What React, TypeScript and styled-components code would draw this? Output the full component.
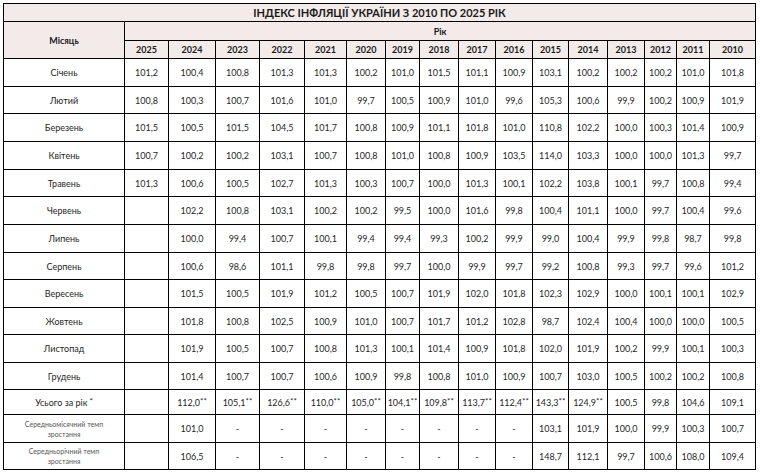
import React from "react";
import styled, { createGlobalStyle } from "styled-components";

const GlobalStyle = createGlobalStyle`
  html, body {
    margin: 0;
    padding: 0;
    background: #fff;
  }
  body {
    font-family: Lato, "Liberation Sans", sans-serif;
    color: #1f1f1f;
  }
`;

const Page = styled.div`
  padding: 3px 0 0 3px;
`;

const Table = styled.table`
  border-collapse: collapse;
  table-layout: fixed;
  width: 753px;
  font-size: 9px;
`;

const HeadCell = styled.th<{ $h?: number }>`
  border: 1px solid #000;
  background: #f3eaea;
  font-weight: 700;
  text-align: center;
  vertical-align: middle;
  padding: 0;
  height: ${(p) => p.$h ?? 17}px;
  color: #1a1a1a;
`;

const Title = styled(HeadCell)`
  font-size: 11px;
`;

const RowHead = styled.td<{ $small?: boolean }>`
  border: 1px solid #000;
  text-align: center;
  vertical-align: middle;
  padding: 0 4px;
  font-size: ${(p) => (p.$small ? "7px" : "9px")};
  line-height: ${(p) => (p.$small ? "10px" : "normal")};
  color: ${(p) => (p.$small ? "#555" : "#1f1f1f")};
`;

const Row = styled.tr<{ $h: number }>`
  height: ${(p) => p.$h}px;
`;

const Cell = styled.td`
  border: 1px solid #000;
  text-align: center;
  vertical-align: middle;
  padding: 0;
  white-space: nowrap;
`;

const Stars = styled.sup`
  font-size: 8px;
  line-height: 0;
  vertical-align: 2px;
`;

const colWidths = [121, 44, 47, 44, 45, 42, 39, 34, 39, 37, 37, 36, 39, 37, 32, 33, 46];
const years = [2025, 2024, 2023, 2022, 2021, 2020, 2019, 2018, 2017, 2016, 2015, 2014, 2013, 2012, 2011, 2010];

type DataRow = { label: string[]; values: string[]; small?: boolean; star?: boolean; h: number };

const split = (s: string) => s.split(" ").map((v) => (v === "_" ? "" : v));

const rows: DataRow[] = [
  { label: ["Січень"], h: 28, values: split("101,2 100,4 100,8 101,3 101,3 100,2 101,0 101,5 101,1 100,9 103,1 100,2 100,2 100,2 101,0 101,8") },
  { label: ["Лютий"], h: 27, values: split("100,8 100,3 100,7 101,6 101,0 99,7 100,5 100,9 101,0 99,6 105,3 100,6 99,9 100,2 100,9 101,9") },
  { label: ["Березень"], h: 28, values: split("101,5 100,5 101,5 104,5 101,7 100,8 100,9 101,1 101,8 101,0 110,8 102,2 100,0 100,3 101,4 100,9") },
  { label: ["Квітень"], h: 28, values: split("100,7 100,2 100,2 103,1 100,7 100,8 101,0 100,8 100,9 103,5 114,0 103,3 100,0 100,0 101,3 99,7") },
  { label: ["Травень"], h: 27, values: split("101,3 100,6 100,5 102,7 101,3 100,3 100,7 100,0 101,3 100,1 102,2 103,8 100,1 99,7 100,8 99,4") },
  { label: ["Червень"], h: 28, values: split("_ 102,2 100,8 103,1 100,2 100,2 99,5 100,0 101,6 99,8 100,4 101,1 100,0 99,7 100,4 99,6") },
  { label: ["Липень"], h: 28, values: split("_ 100,0 99,4 100,7 100,1 99,4 99,4 99,3 100,2 99,9 99,0 100,4 99,9 99,8 98,7 99,8") },
  { label: ["Серпень"], h: 27, values: split("_ 100,6 98,6 101,1 99,8 99,8 99,7 100,0 99,9 99,7 99,2 100,8 99,3 99,7 99,6 101,2") },
  { label: ["Вересень"], h: 28, values: split("_ 101,5 100,5 101,9 101,2 100,5 100,7 101,9 102,0 101,8 102,3 102,9 100,0 100,1 100,1 102,9") },
  { label: ["Жовтень"], h: 27, values: split("_ 101,8 100,8 102,5 100,9 101,0 100,7 101,7 101,2 102,8 98,7 102,4 100,4 100,0 100,0 100,5") },
  { label: ["Листопад"], h: 28, values: split("_ 101,9 100,5 100,7 100,8 101,3 100,1 101,4 100,9 101,8 102,0 101,9 100,2 99,9 100,1 100,3") },
  { label: ["Грудень"], h: 27, values: split("_ 101,4 100,7 100,7 100,6 100,9 99,8 100,8 101,0 100,9 100,7 103,0 100,5 100,2 100,2 100,8") },
  { label: ["Усього за рік"], star: true, h: 25, values: split("_ 112,0** 105,1** 126,6** 110,0** 105,0** 104,1** 109,8** 113,7** 112,4** 143,3** 124,9** 100,5 99,8 104,6 109,1") },
  { label: ["Середньомісячний темп", "зростання"], small: true, h: 28, values: split("_ 101,0 - - - - - - - - 103,1 101,9 100,0 99,9 100,3 100,7") },
  { label: ["Середньорічний темп", "зростання"], small: true, h: 27, values: split("_ 106,5 - - - - - - - - 148,7 112,1 99,7 100,6 108,0 109,4") },
];

function Value({ v }: { v: string }) {
  if (v.endsWith("**")) {
    return (
      <>
        {v.slice(0, -2)}
        <Stars>**</Stars>
      </>
    );
  }
  return <>{v}</>;
}

export default function App() {
  return (
    <Page>
      <GlobalStyle />
      <Table>
        <colgroup>
          {colWidths.map((w, i) => (
            <col key={i} style={{ width: w }} />
          ))}
        </colgroup>
        <thead>
          <tr>
            <Title colSpan={17} $h={17}>
              ІНДЕКС ІНФЛЯЦІЇ УКРАЇНИ З 2010 ПО 2025 РІК
            </Title>
          </tr>
          <tr>
            <HeadCell rowSpan={2}>Місяць</HeadCell>
            <HeadCell colSpan={16} $h={18}>
              Рік
            </HeadCell>
          </tr>
          <tr>
            {years.map((y) => (
              <HeadCell key={y} $h={17}>
                {y}
              </HeadCell>
            ))}
          </tr>
        </thead>
        <tbody>
          {rows.map((r) => (
            <Row key={r.label.join(" ")} $h={r.h}>
              <RowHead $small={r.small}>
                {r.label.map((part, i) => (
                  <React.Fragment key={i}>
                    {i > 0 && <br />}
                    {part}
                  </React.Fragment>
                ))}
                {r.star && <Stars> *</Stars>}
              </RowHead>
              {r.values.map((v, i) => (
                <Cell key={i}>
                  <Value v={v} />
                </Cell>
              ))}
            </Row>
          ))}
        </tbody>
      </Table>
    </Page>
  );
}
